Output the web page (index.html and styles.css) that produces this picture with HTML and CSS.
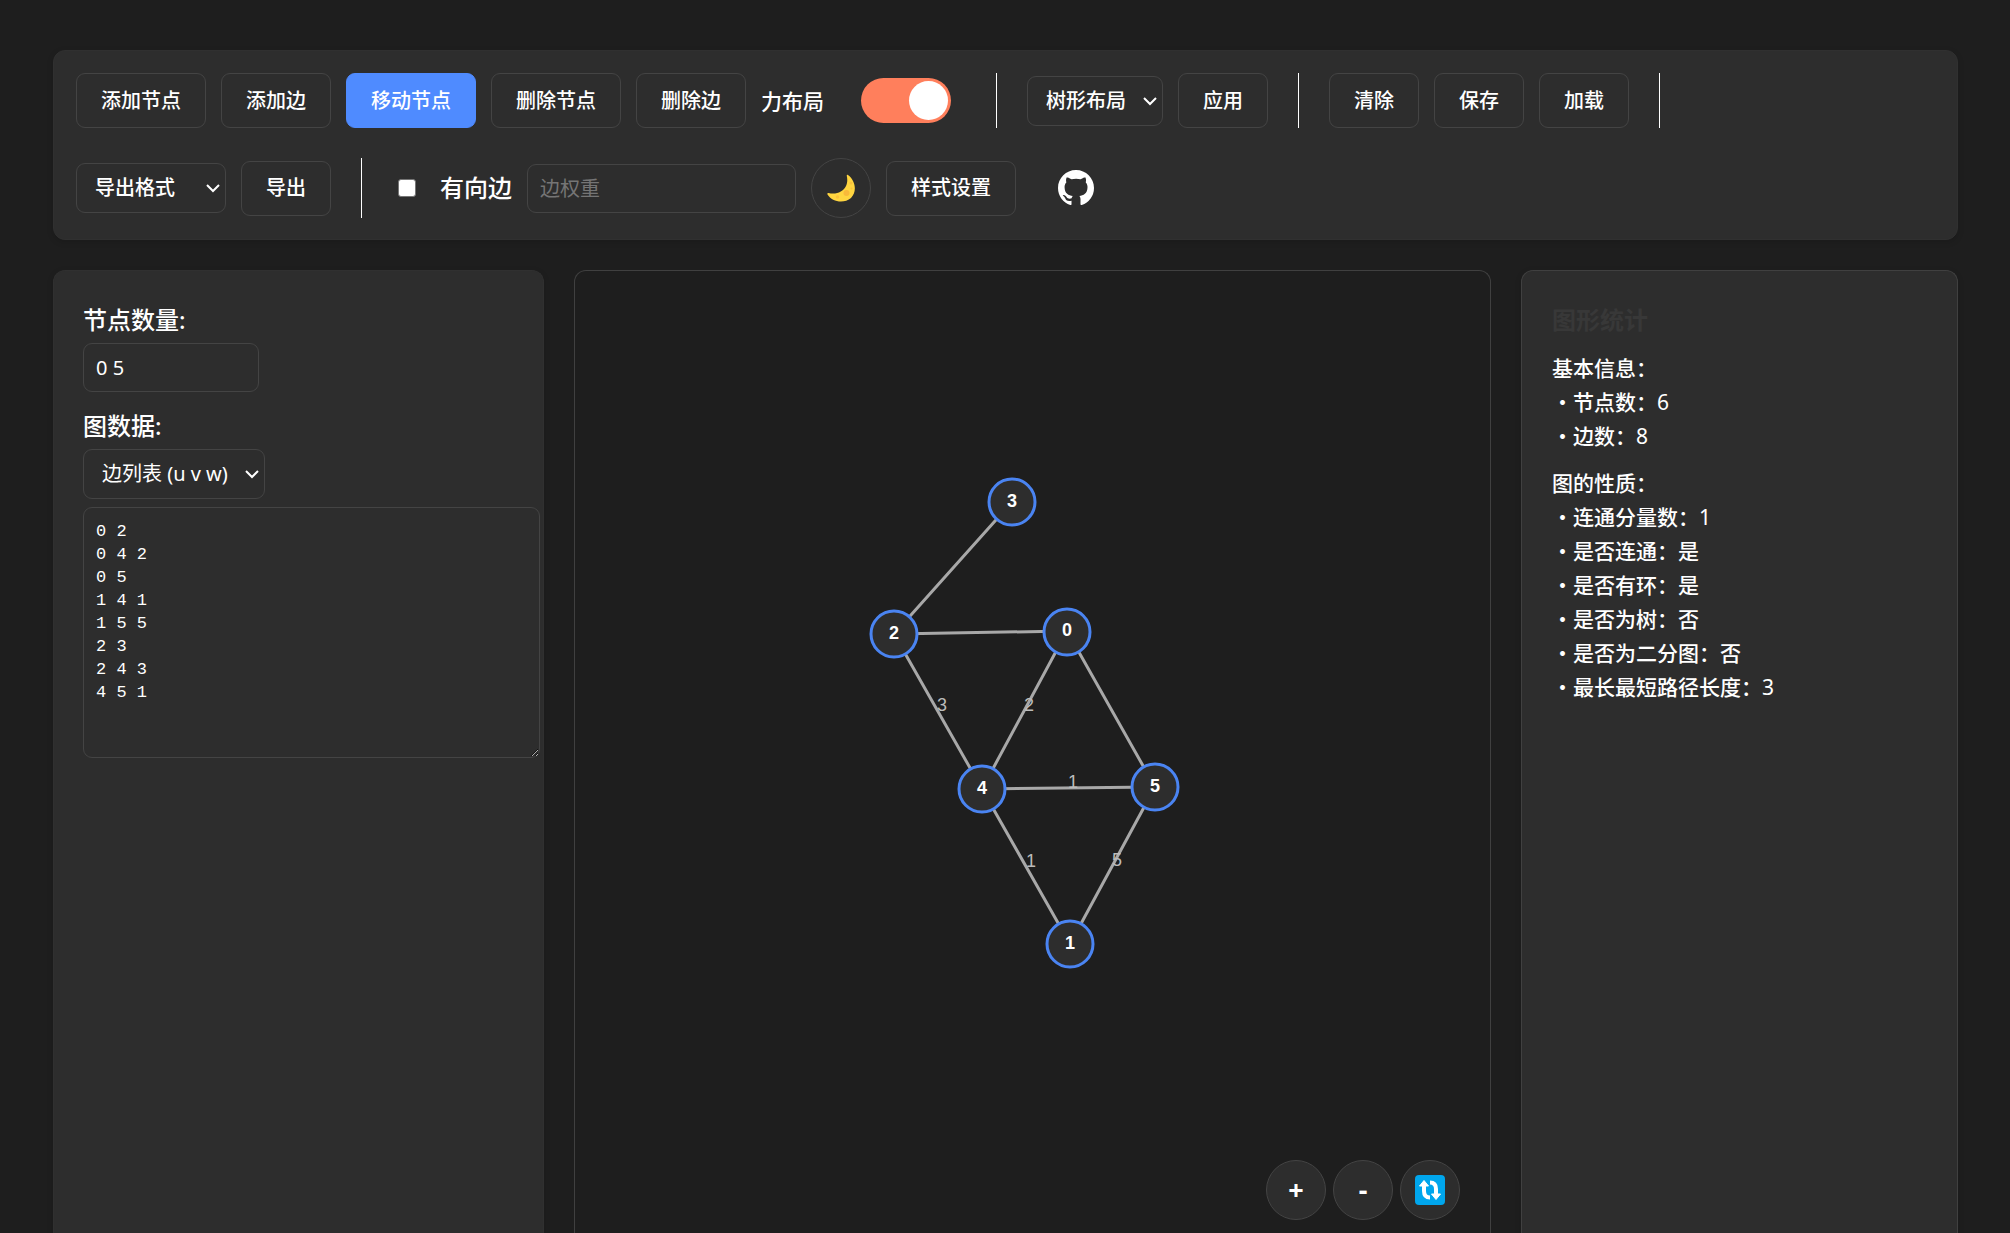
FILE: index.html
```html
<!DOCTYPE html>
<html lang="zh-CN">
<head>
<meta charset="utf-8">
<meta name="viewport" content="width=device-width, initial-scale=1">
<title>图编辑器</title>
<link rel="stylesheet" href="styles.css">
</head>
<body>
<header class="toolbar">
  <div class="tool-group">
    <button class="btn" type="button">添加节点</button>
    <button class="btn" type="button">添加边</button>
    <button class="btn btn-active" type="button">移动节点</button>
    <button class="btn" type="button">删除节点</button>
    <button class="btn" type="button">删除边</button>
    <label class="switch">
      <span>力布局</span>
      <input class="switch-input" type="checkbox" role="switch" checked>
    </label>
  </div>
  <div class="tool-group">
    <span class="select">
      <select class="field select-field select-layout" aria-label="布局方式"><option>树形布局</option></select>
      <svg class="chevron" viewBox="0 0 14 10" aria-hidden="true"><path d="M1 2l6 6 6-6"/></svg>
    </span>
    <button class="btn" type="button">应用</button>
  </div>
  <div class="tool-group">
    <button class="btn" type="button">清除</button>
    <button class="btn" type="button">保存</button>
    <button class="btn" type="button">加载</button>
  </div>
  <div class="tool-group">
    <span class="select">
      <select class="field select-field select-export" aria-label="导出格式"><option>导出格式</option></select>
      <svg class="chevron" viewBox="0 0 14 10" aria-hidden="true"><path d="M1 2l6 6 6-6"/></svg>
    </span>
    <button class="btn" type="button">导出</button>
  </div>
  <div class="tool-group tool-group-last">
    <label class="directed"><input class="checkbox" type="checkbox"><span>有向边</span></label>
    <input class="field weight" type="text" placeholder="边权重" aria-label="边权重">
    <button class="round" type="button" aria-label="切换主题">
      <svg class="moon" viewBox="0 0 30 30" aria-hidden="true">
        <path d="M22 2C30 8 31 19 25 25C18 31 6 29 1.500 21.500C1 20.500 1.500 19.800 2.500 20C10 22 17 19 20 13C21.800 9 21.300 5 20.800 3C20.600 1.800 21.300 1.400 22 2Z" fill="#ffd540"/>
        <circle cx="20.500" cy="20" r="3" fill="#f9b93a"/><circle cx="11.500" cy="24" r="1.800" fill="#f9c23c"/><circle cx="25" cy="10" r="1.500" fill="#f9c23c"/><circle cx="25.500" cy="15.500" r="1" fill="#f9c23c"/>
      </svg>
    </button>
    <button class="btn" type="button">样式设置</button>
    <a class="github" href="#github" aria-label="GitHub">
      <svg viewBox="0 0 16 16" width="36" height="36" aria-hidden="true"><path fill="#fff" fill-rule="evenodd" d="M8 0C3.580 0 0 3.580 0 8c0 3.540 2.290 6.530 5.470 7.590.4.070.55-.17.55-.38 0-.19-.01-.82-.01-1.490-2.010.37-2.530-.49-2.690-.94-.09-.23-.48-.94-.82-1.130-.28-.15-.68-.52-.01-.53.63-.01 1.080.58 1.230.82.72 1.210 1.870.87 2.330.66.07-.52.28-.87.51-1.070-1.780-.2-3.640-.89-3.640-3.950 0-.87.31-1.590.82-2.150-.08-.2-.36-1.020.08-2.120 0 0 .67-.21 2.200.82.64-.18 1.320-.27 2-.27s1.360.09 2 .27c1.530-1.040 2.200-.82 2.200-.82.44 1.100.16 1.920.08 2.120.51.56.82 1.270.82 2.150 0 3.070-1.870 3.750-3.650 3.950.29.25.54.73.54 1.480 0 1.070-.01 1.930-.01 2.200 0 .21.15.46.55.38A8.010 8.010 0 0 0 16 8c0-4.420-3.580-8-8-8z"/></svg>
    </a>
  </div>
</header>
<main class="workspace">
  <section class="panel input-panel">
    <label class="field-label" for="node-count">节点数量:</label>
    <input class="field node-count" id="node-count" type="text" value="0 5">
    <label class="field-label" for="data-format">图数据:</label>
    <span class="select">
      <select class="field select-field select-format" id="data-format"><option>边列表 (u v w)</option></select>
      <svg class="chevron" viewBox="0 0 14 10" aria-hidden="true"><path d="M1 2l6 6 6-6"/></svg>
    </span>
    <textarea class="graph-data" aria-label="图数据">0 2
0 4 2
0 5
1 4 1
1 5 5
2 3
2 4 3
4 5 1</textarea>
  </section>
  <section class="canvas" aria-label="图画布">
    <svg class="graph" viewBox="0 -1 915 962" preserveAspectRatio="xMidYMin meet" role="img" aria-label="图">
      <g class="edges">
        <path d="M437 230L319 362M319 362L492 359M319 362L407 517M492 359L407 517M492 359L580 515M407 517L580 515M407 517L495 672M580 515L495 672"/>
      </g>
      <g class="weights">
        <text x="367" y="439">3</text><text x="454" y="439">2</text><text x="498" y="516">1</text><text x="456" y="595">1</text><text x="542" y="594">5</text>
      </g>
      <g class="nodes">
        <circle cx="437" cy="230" r="23"/><circle cx="319" cy="362" r="23"/><circle cx="492" cy="360" r="23"/><circle cx="407" cy="517" r="23"/><circle cx="580" cy="515" r="23"/><circle cx="495" cy="672" r="23"/>
      </g>
      <g class="node-names">
        <text x="437" y="235">3</text><text x="319" y="367">2</text><text x="492" y="364">0</text><text x="407" y="522">4</text><text x="580" y="520">5</text><text x="495" y="677">1</text>
      </g>
    </svg>
    <div class="zoom-controls">
      <button class="round" type="button" aria-label="放大">+</button>
      <button class="round" type="button" aria-label="缩小">-</button>
      <button class="round" type="button" aria-label="重置视图">
        <svg viewBox="0 0 30 30" width="30" height="30" aria-hidden="true">
          <rect width="30" height="30" rx="4" fill="#00a6ed"/>
          <path d="M9 9v7c0 4.500 2 6.500 6 6.500M21 21v-7c0-4.500-2-6.500-6-6.500" fill="none" stroke="#fff" stroke-width="4"/>
          <path d="M4.500 11L9 5.500l4.500 5.500zM16.500 19h9L21 24.500z" fill="#fff" stroke="#fff" stroke-linejoin="round"/>
        </svg>
      </button>
    </div>
  </section>
  <aside class="panel stats">
    <h2 class="stats-title">图形统计</h2>
    <h3 class="stats-heading">基本信息：</h3>
    <ul class="stats-list">
      <li>节点数：<span class="number">6</span></li>
      <li>边数：<span class="number">8</span></li>
    </ul>
    <h3 class="stats-heading">图的性质：</h3>
    <ul class="stats-list">
      <li>连通分量数：<span class="number">1</span></li>
      <li>是否连通：是</li>
      <li>是否有环：是</li>
      <li>是否为树：否</li>
      <li>是否为二分图：否</li>
      <li>最长最短路径长度：<span class="number">3</span></li>
    </ul>
  </aside>
</main>
</body>
</html>
```
FILE: styles.css
```css
* { box-sizing: border-box; }

body {
  margin: 0;
  height: 100vh;
  padding: 50px 52px 0 53px;
  display: flex;
  flex-direction: column;
  gap: 30px;
  overflow: hidden;
  background: #1e1e1e;
  color: #fff;
  font: 500 20px/28px "Noto Sans", "Noto Sans CJK SC", sans-serif;
}

button, input, select { font: inherit; color: inherit; }

/* Toolbar */
.toolbar {
  display: flex;
  flex-wrap: wrap;
  gap: 30px;
  padding: 22px 22px 21px;
  border: 1px solid #303030;
  border-radius: 12px;
  background: #2d2d2d;
  box-shadow: 0 2px 6px rgba(0, 0, 0, .15);
}
.tool-group {
  display: flex;
  align-items: center;
  gap: 15px;
  padding-right: 30px;
  border-right: 1px solid #fff;
}
.tool-group-last { border-right: 0; padding-right: 0; }

.btn {
  height: 55px;
  padding: 0 24px;
  border: 1px solid #444;
  border-radius: 9px;
  background: #2d2d2d;
  white-space: nowrap;
  cursor: pointer;
}
.btn-active { background: #4f8bff; border-color: #4f8bff; }

.switch {
  display: flex;
  align-items: center;
  gap: 37px;
  margin-right: 15px;
  font-size: 21px;
}
.switch-input {
  appearance: none;
  display: flex;
  justify-content: flex-end;
  width: 90px;
  height: 45px;
  margin: 0;
  padding: 3px;
  border-radius: 23px;
  background: #ff7f5c;
}
.switch-input::before {
  content: "";
  width: 39px;
  height: 39px;
  border-radius: 50%;
  background: #fff;
}

.field {
  height: 49px;
  padding: 0 12px;
  border: 1px solid #444;
  border-radius: 9px;
  background: #2d2d2d;
  font-weight: 400;
}
.select { position: relative; display: inline-flex; }
.select-field {
  appearance: none;
  height: 50px;
  padding: 0 18px;
  font-weight: 500;
}
.select-layout { width: 136px; }
.select-export { width: 150px; }
.select-format { width: 182px; font-weight: 400; }
.chevron {
  position: absolute;
  right: 6px;
  top: 20px;
  width: 14px;
  height: 10px;
  fill: none;
  stroke: #fff;
  stroke-width: 2;
  pointer-events: none;
}

.directed {
  display: flex;
  align-items: center;
  gap: 24px;
  padding-left: 6px;
  font-size: 24px;
}
.checkbox {
  appearance: none;
  width: 18px;
  height: 18px;
  margin: 0;
  border: 1px solid #767676;
  border-radius: 3px;
  background: #fff;
}
.weight { width: 269px; }
.weight::placeholder { color: #757575; }

.round {
  display: flex;
  align-items: center;
  justify-content: center;
  width: 60px;
  height: 60px;
  padding: 0;
  border: 1px solid #444;
  border-radius: 50%;
  background: #2d2d2d;
  font-size: 27px;
  font-weight: 700;
  cursor: pointer;
}
.moon { width: 30px; height: 30px; }
.github {
  display: flex;
  align-items: center;
  justify-content: center;
  width: 60px;
  height: 60px;
  margin-left: 15px;
}

/* Workspace */
.workspace {
  flex: 1;
  min-height: 0;
  display: grid;
  grid-template-columns: minmax(0, 491fr) minmax(0, 917fr) minmax(0, 437fr);
  gap: 30px;
}
.panel, .canvas {
  border: 1px solid #404040;
  border-bottom: 0;
  border-radius: 12px 12px 0 0;
}
.panel {
  padding: 30px;
  background: #2d2d2d;
  box-shadow: 0 2px 6px rgba(0, 0, 0, .15);
}
.input-panel {
  display: flex;
  flex-direction: column;
  align-items: flex-start;
  padding: 30px 3px 0 29px;
  border-color: #303030;
}
.field-label {
  font-size: 24px;
  line-height: 38px;
  margin-bottom: 4px;
}
.node-count { width: 176px; margin-bottom: 15px; }
.graph-data {
  width: 100%;
  height: 251px;
  margin-top: 8px;
  padding: 12px;
  border: 1px solid #444;
  border-radius: 9px;
  background: #2d2d2d;
  color: #fff;
  font: 17px/23px "Liberation Mono", monospace;
  resize: both;
}

.canvas { position: relative; overflow: hidden; }
.graph { display: block; width: 100%; }
.edges { fill: none; stroke: #a8a8a8; stroke-width: 3; }
.nodes { fill: #2d2d2d; stroke: #4a84f2; stroke-width: 3; }
.weights, .node-names {
  font: 18px "Liberation Sans", sans-serif;
  fill: #bbb;
  text-anchor: middle;
}
.node-names { font-weight: 700; fill: #fff; }

.zoom-controls {
  position: absolute;
  right: 30px;
  bottom: 13px;
  display: flex;
  gap: 7px;
}

.stats { font-size: 21px; line-height: 34px; }
.stats-title {
  margin: 0 0 12px;
  color: #383838;
  font-size: 24px;
  line-height: 38px;
}
.stats-heading { margin: 0; font-size: 21px; font-weight: 500; }
.stats-list { margin: 0 0 13px; padding: 0; list-style: none; }
.stats-list li::before { content: "・"; }
.number { font-weight: 400; }
```
